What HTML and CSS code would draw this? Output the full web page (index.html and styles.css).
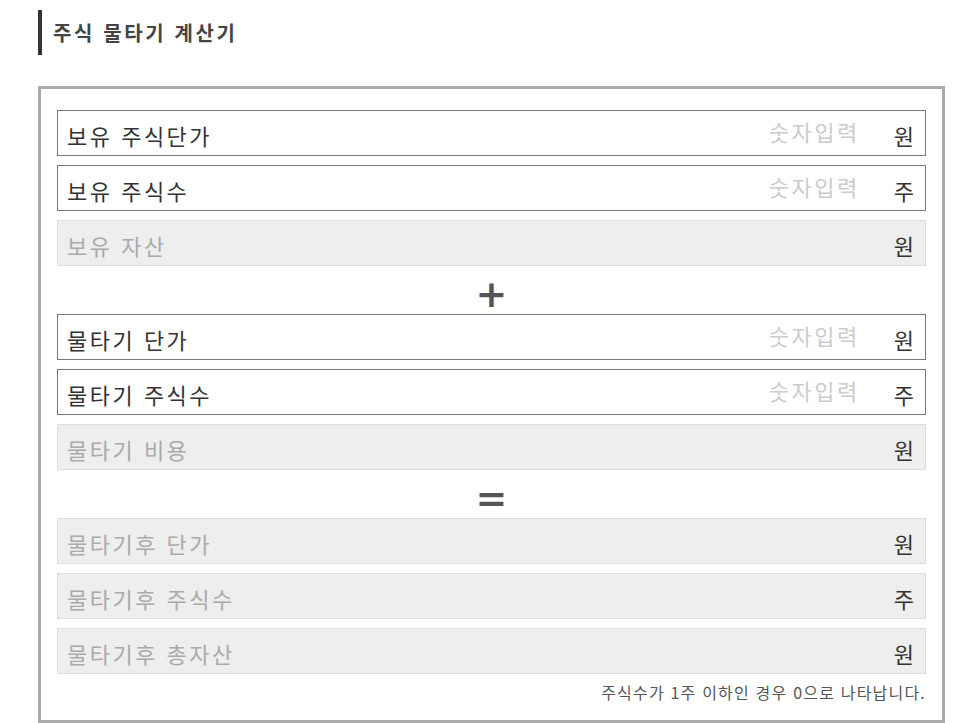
FILE: index.html
```html
<!DOCTYPE html>
<html lang="ko">
<head>
  <meta charset="UTF-8">
  <title>주식 물타기 계산기</title>
  <meta name="viewport" content="width=device-width, initial-scale=1.0">
  <link rel="stylesheet" href="styles.css">
</head>
<body>
  <h3 class="title">주식 물타기 계산기</h3>

  <div class="calc">
    <div class="row">
      <span class="label">보유 주식단가</span>
      <input type="text" id="price" placeholder="숫자입력">
      <span class="unit">원</span>
    </div>
    <div class="row">
      <span class="label">보유 주식수</span>
      <input type="text" id="count" placeholder="숫자입력">
      <span class="unit">주</span>
    </div>
    <div class="row readonly">
      <span class="label">보유 자산</span>
      <input type="text" id="asset" readonly>
      <span class="unit">원</span>
    </div>

    <div class="sign">+</div>

    <div class="row">
      <span class="label">물타기 단가</span>
      <input type="text" id="addPrice" placeholder="숫자입력">
      <span class="unit">원</span>
    </div>
    <div class="row">
      <span class="label">물타기 주식수</span>
      <input type="text" id="addCount" placeholder="숫자입력">
      <span class="unit">주</span>
    </div>
    <div class="row readonly">
      <span class="label">물타기 비용</span>
      <input type="text" id="addCost" readonly>
      <span class="unit">원</span>
    </div>

    <div class="sign">=</div>

    <div class="row readonly">
      <span class="label">물타기후 단가</span>
      <input type="text" id="avgPrice" readonly>
      <span class="unit">원</span>
    </div>
    <div class="row readonly">
      <span class="label">물타기후 주식수</span>
      <input type="text" id="totalCount" readonly>
      <span class="unit">주</span>
    </div>
    <div class="row readonly">
      <span class="label">물타기후 총자산</span>
      <input type="text" id="totalAsset" readonly>
      <span class="unit">원</span>
    </div>

    <p class="note">주식수가 1주 이하인 경우 0으로 나타납니다.</p>
  </div>

  <script>
    const ids = ["price", "count", "addPrice", "addCount"];
    const num = (id) => parseFloat(document.getElementById(id).value.replace(/,/g, "")) || 0;
    const fmt = (v) => Math.round(v).toLocaleString("ko-KR");

    function calc() {
      const asset = num("price") * num("count");
      const cost = num("addPrice") * num("addCount");
      const total = num("count") + num("addCount");

      document.getElementById("asset").value = asset ? fmt(asset) : "";
      document.getElementById("addCost").value = cost ? fmt(cost) : "";
      document.getElementById("totalCount").value = total ? fmt(total) : "";
      document.getElementById("avgPrice").value = total >= 1 ? fmt((asset + cost) / total) : "";
      document.getElementById("totalAsset").value = (asset + cost) ? fmt(asset + cost) : "";
    }

    ids.forEach((id) => document.getElementById(id).addEventListener("input", calc));
  </script>
</body>
</html>
```

FILE: styles.css
```css
body {
  font-family: "Noto Sans CJK KR", "Noto Sans", sans-serif;
  margin: 0;
  padding: 10px 27px 0 38px;
  background: #fff;
  color: #333;
}

.title {
  margin: 0;
  height: 45px;
  line-height: 45px;
  padding-left: 11px;
  border-left: 4px solid #333;
  font-size: 20px;
  font-weight: bold;
  letter-spacing: 2.6px;
  color: #444;
}

.calc {
  margin-top: 31px;
  border: 3px solid #aaa;
  padding: 21px 16px 19px;
}

.row {
  display: flex;
  align-items: center;
  height: 44px;
  border: 1px solid #777;
  padding: 0 9px 0 9px;
  margin-bottom: 9px;
  background: #fff;
}

.label {
  font-size: 22px;
  letter-spacing: 2.5px;
  color: #333;
  white-space: nowrap;
  padding-top: 4px;
}

.row input {
  flex: 1;
  min-width: 0;
  border: none;
  outline: none;
  background: transparent;
  font-family: inherit;
  font-size: 22px;
  letter-spacing: 2.5px;
  text-align: right;
  color: #333;
  padding: 0 0 4px;
  margin-right: 34px;
}

.row input::placeholder {
  color: #ccc;
}

.unit {
  font-size: 22px;
  letter-spacing: 2px;
  color: #333;
  padding-top: 3px;
}

.row.readonly {
  background: #eee;
  border-color: #ddd;
}

.row.readonly .label {
  color: #aaa;
}

.sign {
  text-align: center;
  font-family: "DejaVu Sans", sans-serif;
  font-size: 38px;
  font-weight: bold;
  line-height: 39px;
  height: 39px;
  color: #555;
}

.note {
  margin: 0;
  text-align: right;
  font-size: 16px;
  line-height: 18px;
  letter-spacing: 1.2px;
  color: #555;
}
```
